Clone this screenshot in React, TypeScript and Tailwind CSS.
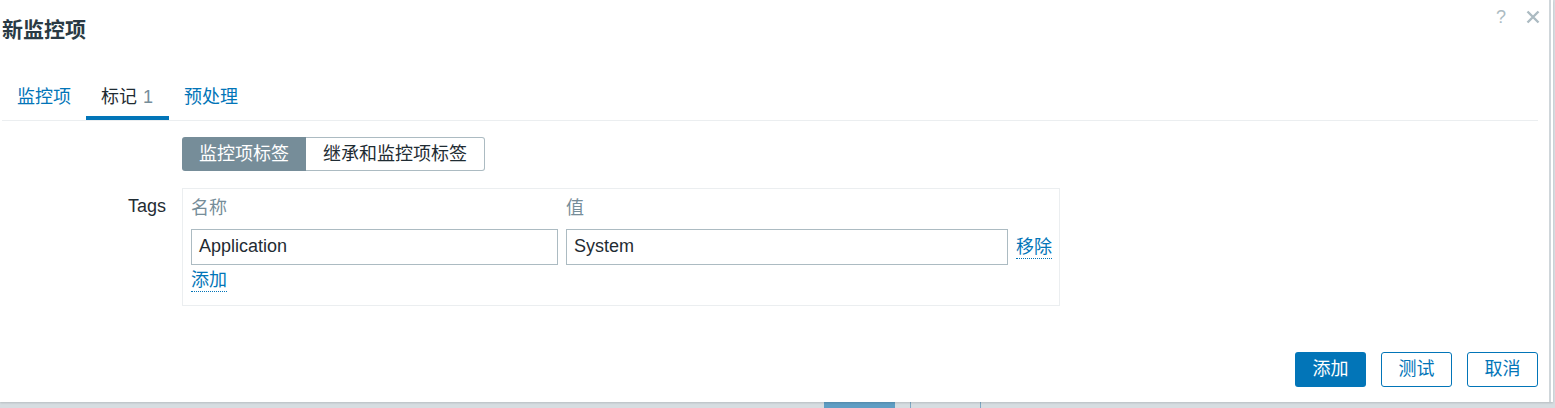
import React from "react";

const font = { fontFamily: '"Liberation Sans", Arial, "Noto Sans CJK SC", sans-serif' };

export default function App() {
  return (
    <div className="relative w-[1555px] h-[408px] overflow-hidden bg-[#d6dde1]" style={font}>
      {/* page behind the dialog */}
      <div className="flex h-full items-end">
        <div className="flex h-[6px] w-full">
          <div className="w-[824px]" />
          <div className="w-[71px] bg-[#5f9ec4]" />
          <div className="w-[15px]" />
          <div className="w-[1px] bg-[#7fa9c4]" />
          <div className="w-[69px]" />
          <div className="w-[1px] bg-[#7fa9c4]" />
        </div>
      </div>

      {/* dialog */}
      <div className="absolute left-0 top-0 flex h-[402px] w-[1553px] bg-white shadow-[0_1px_2px_rgba(0,0,0,0.15)]">
        <div className="relative flex w-[1549px] flex-col">
          {/* header */}
          <div className="flex h-[60px] items-center pl-[2px]">
            <h4 className="text-[21px] font-bold text-[#2a3a44]">新监控项</h4>
          </div>
          <div className="absolute right-[9px] top-[8px] flex items-center gap-[20px] text-[#acbbc2]">
            <span className="text-[18px] leading-none">?</span>
            <svg width="14" height="14" viewBox="0 0 14 14">
              <path d="M1.5 1.5 L12.5 12.5 M12.5 1.5 L1.5 12.5" stroke="#acbbc2" strokeWidth="2.4" />
            </svg>
          </div>

          {/* tabs */}
          <div className="ml-[2px] mr-[11px] mt-[14px] flex border-b border-[#ebeef0]">
            <div className="flex h-[46px] items-center border-b-4 border-transparent px-[15px] pt-[4px] text-[18px] text-[#0275b8]">
              监控项
            </div>
            <div className="flex h-[46px] w-[83px] items-center border-b-4 border-[#0275b8] px-[15px] pt-[4px] text-[18px] text-[#1f2c33]">
              标记<span className="ml-[6px] text-[#768d99]">1</span>
            </div>
            <div className="flex h-[46px] items-center border-b-4 border-transparent px-[15px] pt-[4px] text-[18px] text-[#0275b8]">
              预处理
            </div>
          </div>

          {/* form */}
          <div className="mt-[16px] flex flex-col">
            <div className="flex">
              <div className="w-[182px]" />
              <div className="flex h-[34px] text-[18px]">
                <div className="flex w-[124px] items-center justify-center rounded-l-[3px] bg-[#768d99] text-white">
                  监控项标签
                </div>
                <div className="flex w-[179px] items-center justify-center rounded-r-[3px] border border-l-0 border-[#acbbc2] text-[#1f2c33]">
                  继承和监控项标签
                </div>
              </div>
            </div>

            <div className="mt-[17px] flex">
              <div className="w-[182px] pr-[16px] pt-[5px] text-right text-[18px] text-[#1f2c33]">Tags</div>
              <div className="flex h-[118px] w-[878px] flex-col border border-[#ebeef0] pl-[8px] pr-[7px] pt-[6px]">
                <div className="flex text-[18px] text-[#768d99]">
                  <div className="w-[375px]">名称</div>
                  <div>值</div>
                </div>
                <div className="mt-[7px] flex items-center">
                  <div className="flex h-[36px] w-[367px] items-center border border-[#acbbc2] px-[7px] pb-[2px] text-[18px] text-[#1f2c33]">
                    Application
                  </div>
                  <div className="ml-[8px] flex h-[36px] w-[442px] items-center border border-[#acbbc2] px-[7px] pb-[2px] text-[18px] text-[#1f2c33]">
                    System
                  </div>
                  <span className="ml-[8px] border-b border-dotted border-[#0275b8] text-[18px] leading-[22px] text-[#0275b8]">
                    移除
                  </span>
                </div>
                <div className="mt-[4px] flex">
                  <span className="border-b border-dotted border-[#0275b8] text-[18px] leading-[22px] text-[#0275b8]">
                    添加
                  </span>
                </div>
              </div>
            </div>
          </div>

          {/* footer */}
          <div className="mt-auto mb-[15px] mr-[11px] flex justify-end gap-[15px]">
            <button className="h-[35px] w-[71px] rounded-[3px] bg-[#0275b8] text-[18px] text-white">添加</button>
            <button className="h-[35px] w-[71px] rounded-[3px] border border-[#0275b8] bg-white text-[18px] text-[#0275b8]">测试</button>
            <button className="h-[35px] w-[71px] rounded-[3px] border border-[#0275b8] bg-white text-[18px] text-[#0275b8]">取消</button>
          </div>
        </div>
        <div className="w-[2px] bg-[#cfd6da]" />
        <div className="w-[2px] bg-white" />
      </div>
    </div>
  );
}
